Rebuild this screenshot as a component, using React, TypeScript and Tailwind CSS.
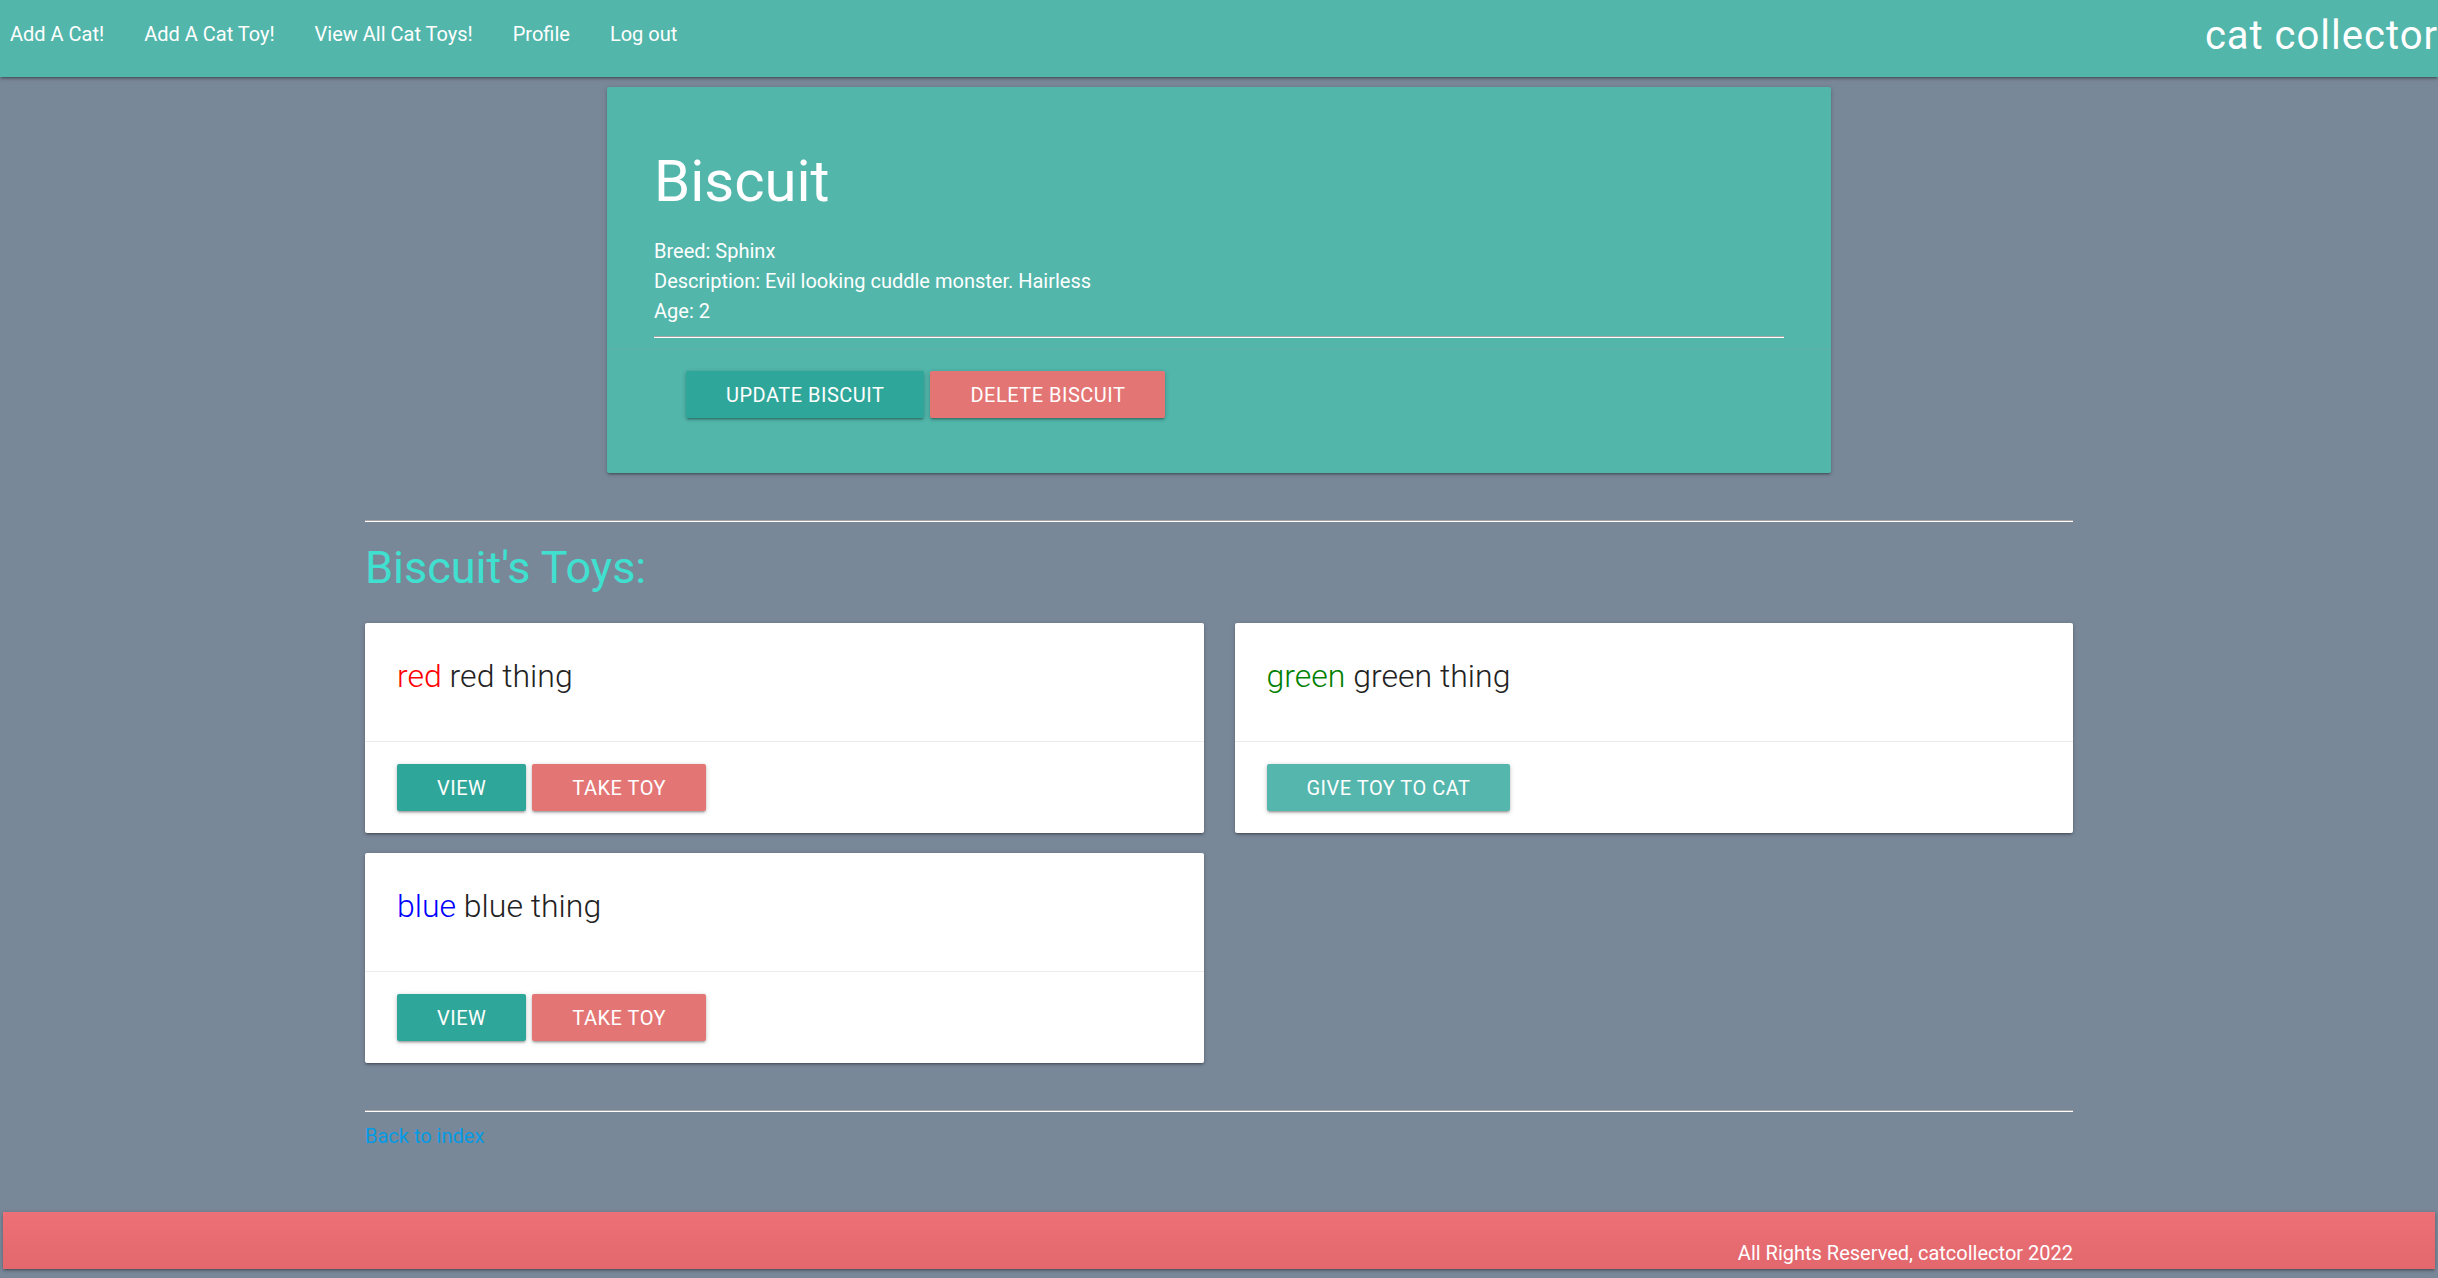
import React from 'react';

type Toy = {
  color: string;
  name: string;
  colorClass: string;
  owned: boolean;
};

const toys: Toy[] = [
  { color: 'red', name: 'red thing', colorClass: 'text-[#ff0000]', owned: true },
  { color: 'green', name: 'green thing', colorClass: 'text-[#008000]', owned: false },
  { color: 'blue', name: 'blue thing', colorClass: 'text-[#0000ff]', owned: true },
];

const navLinks = ['Add A Cat!', 'Add A Cat Toy!', 'View All Cat Toys!', 'Profile', 'Log out'];

const depth1 =
  'shadow-[0_2px_2px_0_rgba(0,0,0,0.14),0_3px_1px_-2px_rgba(0,0,0,0.12),0_1px_5px_0_rgba(0,0,0,0.2)]';

function Btn({ label, color }: { label: string; color: string }) {
  return (
    <button
      className={
        'h-[47px] px-[40px] rounded-[2px] text-white text-[20px] uppercase tracking-[0.5px] ' +
        color +
        ' ' +
        depth1
      }
    >
      {label}
    </button>
  );
}

function Rule() {
  return <div className="border-t border-b border-t-[#a9a4a8] border-b-white" />;
}

function ToyCard({ toy }: { toy: Toy }) {
  return (
    <div className={'bg-white rounded-[2px] ' + depth1}>
      <div className="h-[118px] px-[32px] pt-[34px]">
        <span className="text-[32px] leading-[38px] font-light text-[#222]">
          <span className={toy.colorClass}>{toy.color}</span> {toy.name}
        </span>
      </div>
      <div className="border-t border-[#ececec] px-[32px] py-[22px] flex gap-[6px]">
        {toy.owned ? (
          <>
            <Btn label="View" color="bg-[#2fa69a]" />
            <Btn label="Take Toy" color="bg-[#e47575]" />
          </>
        ) : (
          <Btn label="Give Toy To Cat" color="bg-[#55b6ad]" />
        )}
      </div>
    </div>
  );
}

export default function App() {
  return (
    <div className="min-h-screen bg-[#798899] font-['Roboto','Liberation_Sans',sans-serif] pb-[9px]">
      <nav className={'relative z-10 h-[77px] bg-[#52b6ab] text-white flex items-start overflow-hidden ' + depth1}>
        <ul className="flex gap-[40px] pl-[10px]">
          {navLinks.map((l) => (
            <li key={l}>
              <a href="#" className="text-[20px] leading-[69px]">
                {l}
              </a>
            </li>
          ))}
        </ul>
        <a href="#" className="ml-auto text-[40px] leading-[72px] tracking-[1px] whitespace-nowrap">
          cat collector
        </a>
      </nav>

      <main>
        <div className={'mx-auto mt-[10px] w-[1224px] bg-[#52b6ab] rounded-[2px] text-white ' + depth1}>
          <div className="px-[47px] pt-[59px] pb-[11px]">
            <h1 className="text-[58px] leading-[70px]">Biscuit</h1>
            <div className="mt-[20px] text-[20px] leading-[30px]">
              <p>Breed: Sphinx</p>
              <p>Description: Evil looking cuddle monster. Hairless</p>
              <p>Age: 2</p>
            </div>
            <div className="mt-[10px]">
              <Rule />
            </div>
          </div>
          <div className="border-t border-[rgba(160,160,160,0.2)] pl-[79px] pt-[21px] pb-[55px] flex gap-[6px]">
            <Btn label="Update Biscuit" color="bg-[#2fa69a]" />
            <Btn label="Delete Biscuit" color="bg-[#e47575]" />
          </div>
        </div>

        <div className="mx-auto w-[1708px] mt-[47px]">
          <Rule />
          <h2 className="mt-[20px] text-[45px] leading-[52px] text-[#40e0d0]">Biscuit's Toys:</h2>
          <div className="mt-[29px] grid grid-cols-2 gap-x-[31px] gap-y-[20px]">
            {toys.map((t) => (
              <ToyCard key={t.color} toy={t} />
            ))}
          </div>
          <div className="mt-[47px]">
            <Rule />
          </div>
          <a href="#" className="block mt-[9px] text-[20px] leading-[30px] text-[#039be5]">
            Back to index
          </a>
        </div>
      </main>

      <footer
        className={
          'mt-[61px] mx-[3px] h-[57px] bg-gradient-to-b from-[#ed7076] to-[#e2686e] text-white ' + depth1
        }
      >
        <div className="mx-auto w-[1708px] pt-[26px] text-right text-[20px] leading-[30px]">
          All Rights Reserved, catcollector 2022
        </div>
      </footer>
    </div>
  );
}
